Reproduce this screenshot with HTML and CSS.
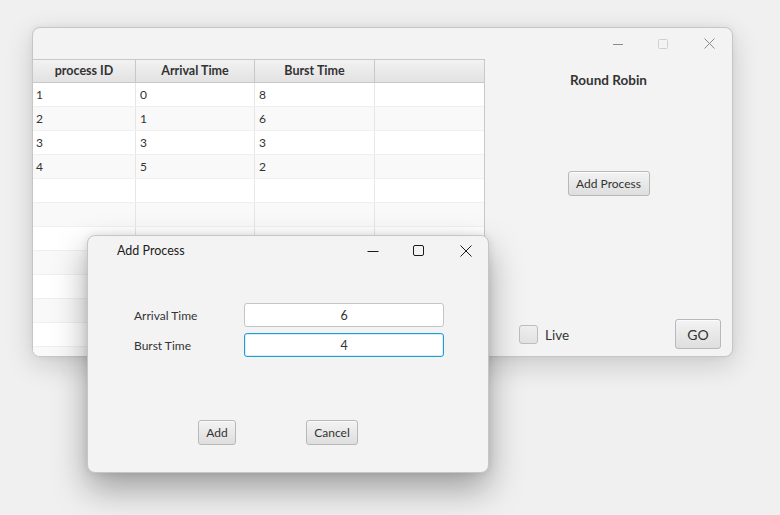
FILE: index.html
```html
<!DOCTYPE html>
<html>
<head>
<meta charset="utf-8">
<link rel="stylesheet" href="styles.css">
</head>
<body>
<div class="desktop">
  <div class="win main-win">
    <div class="titlebar">
      <span class="ctl ctl-min dim"><svg width="10" height="10" viewBox="0 0 10 10"><path d="M0 5.5h10" stroke="#8a8a8a" stroke-width="1"/></svg></span>
      <span class="ctl ctl-max dim"><svg width="10" height="10" viewBox="0 0 10 10"><rect x="0.5" y="0.5" width="9" height="9" rx="1" fill="none" stroke="#d0d0d0" stroke-width="1"/></svg></span>
      <span class="ctl ctl-close dim"><svg width="11" height="11" viewBox="0 0 11 11"><path d="M0.5 0.5L10.5 10.5M10.5 0.5L0.5 10.5" stroke="#8a8a8a" stroke-width="1"/></svg></span>
    </div>
    <div class="main-body">
      <div class="table">
        <div class="thead">
          <div class="th">process ID</div>
          <div class="th">Arrival Time</div>
          <div class="th">Burst Time</div>
          <div class="th"></div>
        </div>
        <div class="tr"><div class="td">1</div><div class="td">0</div><div class="td">8</div><div class="td"></div></div>
        <div class="tr odd"><div class="td">2</div><div class="td">1</div><div class="td">6</div><div class="td"></div></div>
        <div class="tr"><div class="td">3</div><div class="td">3</div><div class="td">3</div><div class="td"></div></div>
        <div class="tr odd"><div class="td">4</div><div class="td">5</div><div class="td">2</div><div class="td"></div></div>
        <div class="tr"><div class="td"></div><div class="td"></div><div class="td"></div><div class="td"></div></div>
        <div class="tr odd"><div class="td"></div><div class="td"></div><div class="td"></div><div class="td"></div></div>
        <div class="tr"><div class="td"></div><div class="td"></div><div class="td"></div><div class="td"></div></div>
        <div class="tr odd"><div class="td"></div><div class="td"></div><div class="td"></div><div class="td"></div></div>
        <div class="tr"><div class="td"></div><div class="td"></div><div class="td"></div><div class="td"></div></div>
        <div class="tr odd"><div class="td"></div><div class="td"></div><div class="td"></div><div class="td"></div></div>
        <div class="tr"><div class="td"></div><div class="td"></div><div class="td"></div><div class="td"></div></div>
        <div class="tr odd"><div class="td"></div><div class="td"></div><div class="td"></div><div class="td"></div></div>
      </div>
      <div class="side">
        <div class="side-title">Round Robin</div>
        <button class="btn btn-add-process">Add Process</button>
        <div class="side-bottom">
          <label class="check"><span class="box"></span><span class="check-label">Live</span></label>
          <button class="btn btn-go">GO</button>
        </div>
      </div>
    </div>
  </div>

  <div class="win dialog">
    <div class="titlebar dlg-titlebar">
      <span class="dlg-title">Add Process</span>
      <span class="ctl dctl-min"><svg width="12" height="10" viewBox="0 0 12 10"><path d="M0.5 5.5h11" stroke="#1b1b1b" stroke-width="1"/></svg></span>
      <span class="ctl dctl-max"><svg width="11" height="11" viewBox="0 0 11 11"><rect x="0.5" y="0.5" width="10" height="10" rx="1.5" fill="none" stroke="#1b1b1b" stroke-width="1"/></svg></span>
      <span class="ctl dctl-close"><svg width="12" height="12" viewBox="0 0 12 12"><path d="M0.5 0.5L11.5 11.5M11.5 0.5L0.5 11.5" stroke="#1b1b1b" stroke-width="1"/></svg></span>
    </div>
    <div class="form">
      <span class="flabel">Arrival Time</span>
      <div class="field">6</div>
      <span class="flabel">Burst Time</span>
      <div class="field focused">4</div>
    </div>
    <div class="dlg-buttons">
      <button class="btn btn-small btn-add">Add</button>
      <button class="btn btn-small btn-cancel">Cancel</button>
    </div>
  </div>
</div>
</body>
</html>
```

FILE: styles.css
```css
* { box-sizing: border-box; }
html, body { margin: 0; padding: 0; }
body {
  width: 780px;
  height: 515px;
  overflow: hidden;
  background: #f0f0f0;
  font-family: "Lato", "Liberation Sans", sans-serif;
  font-size: 12px;
  color: #333;
}
.desktop {
  position: relative;
  width: 780px;
  height: 515px;
}
.win {
  position: absolute;
  background: #f3f3f3;
  border: 1px solid #c6c6c6;
  border-radius: 8px;
  overflow: hidden;
  display: flex;
  flex-direction: column;
}
.main-win {
  left: 32px;
  top: 27px;
  width: 701px;
  height: 330px;
  box-shadow: 0 8px 28px rgba(0,0,0,0.16), 0 0 6px rgba(0,0,0,0.06);
}
.titlebar {
  height: 31px;
  flex: none;
  display: flex;
  align-items: center;
  position: relative;
}
.ctl {
  display: flex;
  align-items: center;
  justify-content: center;
  line-height: 0;
}
.ctl-min { margin-left: auto; margin-right: 35px; }
.ctl-max { margin-right: 36px; }
.ctl-close { margin-right: 17px; }

.main-body {
  flex: 1;
  display: flex;
  min-height: 0;
}
.table {
  width: 452px;
  flex: none;
  background: #fff;
  border-right: 1px solid #c8c8c8;
  overflow: hidden;
}
.thead, .tr {
  display: grid;
  grid-template-columns: 103px 119px 120px 1fr;
}
.thead {
  height: 24px;
  background: linear-gradient(#f2f2f2, #e2e2e2);
  border-top: 1px solid #c8c8c8;
  border-bottom: 1px solid #c8c8c8;
}
.th {
  border-right: 1px solid #c8c8c8;
  display: flex;
  align-items: center;
  justify-content: center;
  font-weight: bold;
  font-size: 12.5px;
  color: #333;
  padding-bottom: 1px;
}
.th:last-child { border-right: none; }
.tr {
  height: 24px;
  background: #fff;
  border-bottom: 1px solid #f0f0f0;
}
.tr.odd { background: #f9f9f9; }
.td {
  border-right: 1px solid #e6e6e6;
  padding-left: 4px;
  padding-bottom: 1px;
  display: flex;
  align-items: center;
  font-size: 12px;
  color: #333;
}
.td:first-child { padding-left: 3px; }
.td:last-child { border-right: none; }

.side {
  flex: 1;
  display: flex;
  flex-direction: column;
  align-items: center;
}
.side-title {
  margin-top: 13px;
  font-weight: bold;
  font-size: 13.5px;
  color: #333;
}
.btn {
  font-family: "Lato", "Liberation Sans", sans-serif;
  font-size: 12px;
  color: #333;
  background: linear-gradient(#f3f3f3, #dedede);
  border: 1px solid #b8b8b8;
  border-radius: 3px;
  padding: 0;
  display: flex;
  align-items: center;
  justify-content: center;
  box-shadow: inset 0 1px 0 rgba(255,255,255,0.7);
}
.btn-add-process {
  margin-top: 83px;
  width: 82px;
  height: 25px;
}
.side-bottom {
  margin-top: auto;
  align-self: stretch;
  display: flex;
  align-items: center;
  padding: 0 11px 7px 34px;
}
.check {
  display: flex;
  align-items: center;
  gap: 7px;
  margin-top: 1px;
}
.box {
  width: 19px;
  height: 19px;
  border: 1px solid #bdbdbd;
  border-radius: 3px;
  background: linear-gradient(#efefef, #e2e2e2);
}
.check-label {
  font-size: 13.5px;
  color: #333;
}
.btn-go {
  margin-left: auto;
  width: 46px;
  height: 30px;
  font-size: 14px;
}

.dialog {
  left: 87px;
  top: 235px;
  width: 402px;
  height: 238px;
  box-shadow: 0 16px 34px rgba(0,0,0,0.34), 0 0 8px rgba(0,0,0,0.1);
}
.dlg-titlebar {
  height: 31px;
}
.dlg-title {
  margin-left: 29px;
  font-size: 12.5px;
  color: #1b1b1b;
  margin-top: -2px;
}
.dctl-min { margin-left: auto; margin-right: 34px; margin-top: -2px; }
.dctl-max { margin-right: 36px; margin-top: -2px; }
.dctl-close { margin-right: 16px; margin-top: -2px; }

.form {
  margin-top: 36px;
  margin-left: 46px;
  display: grid;
  grid-template-columns: 110px 200px;
  grid-auto-rows: 24px;
  row-gap: 6px;
  align-items: center;
}
.flabel {
  font-size: 12px;
  color: #333;
}
.field {
  height: 24px;
  background: #fff;
  border: 1px solid #c4c4c4;
  border-radius: 3px;
  display: flex;
  align-items: center;
  justify-content: center;
  font-size: 12.5px;
  color: #333;
}
.field.focused {
  border: 1.5px solid #1a9fd6;
  box-shadow: inset 0 0 0 1px #d9eef8;
}
.dlg-buttons {
  margin-top: 63px;
  padding-left: 110px;
  display: flex;
}
.btn-small { height: 25px; }
.btn-add { width: 38px; }
.btn-cancel { width: 52px; margin-left: 70px; }
```
